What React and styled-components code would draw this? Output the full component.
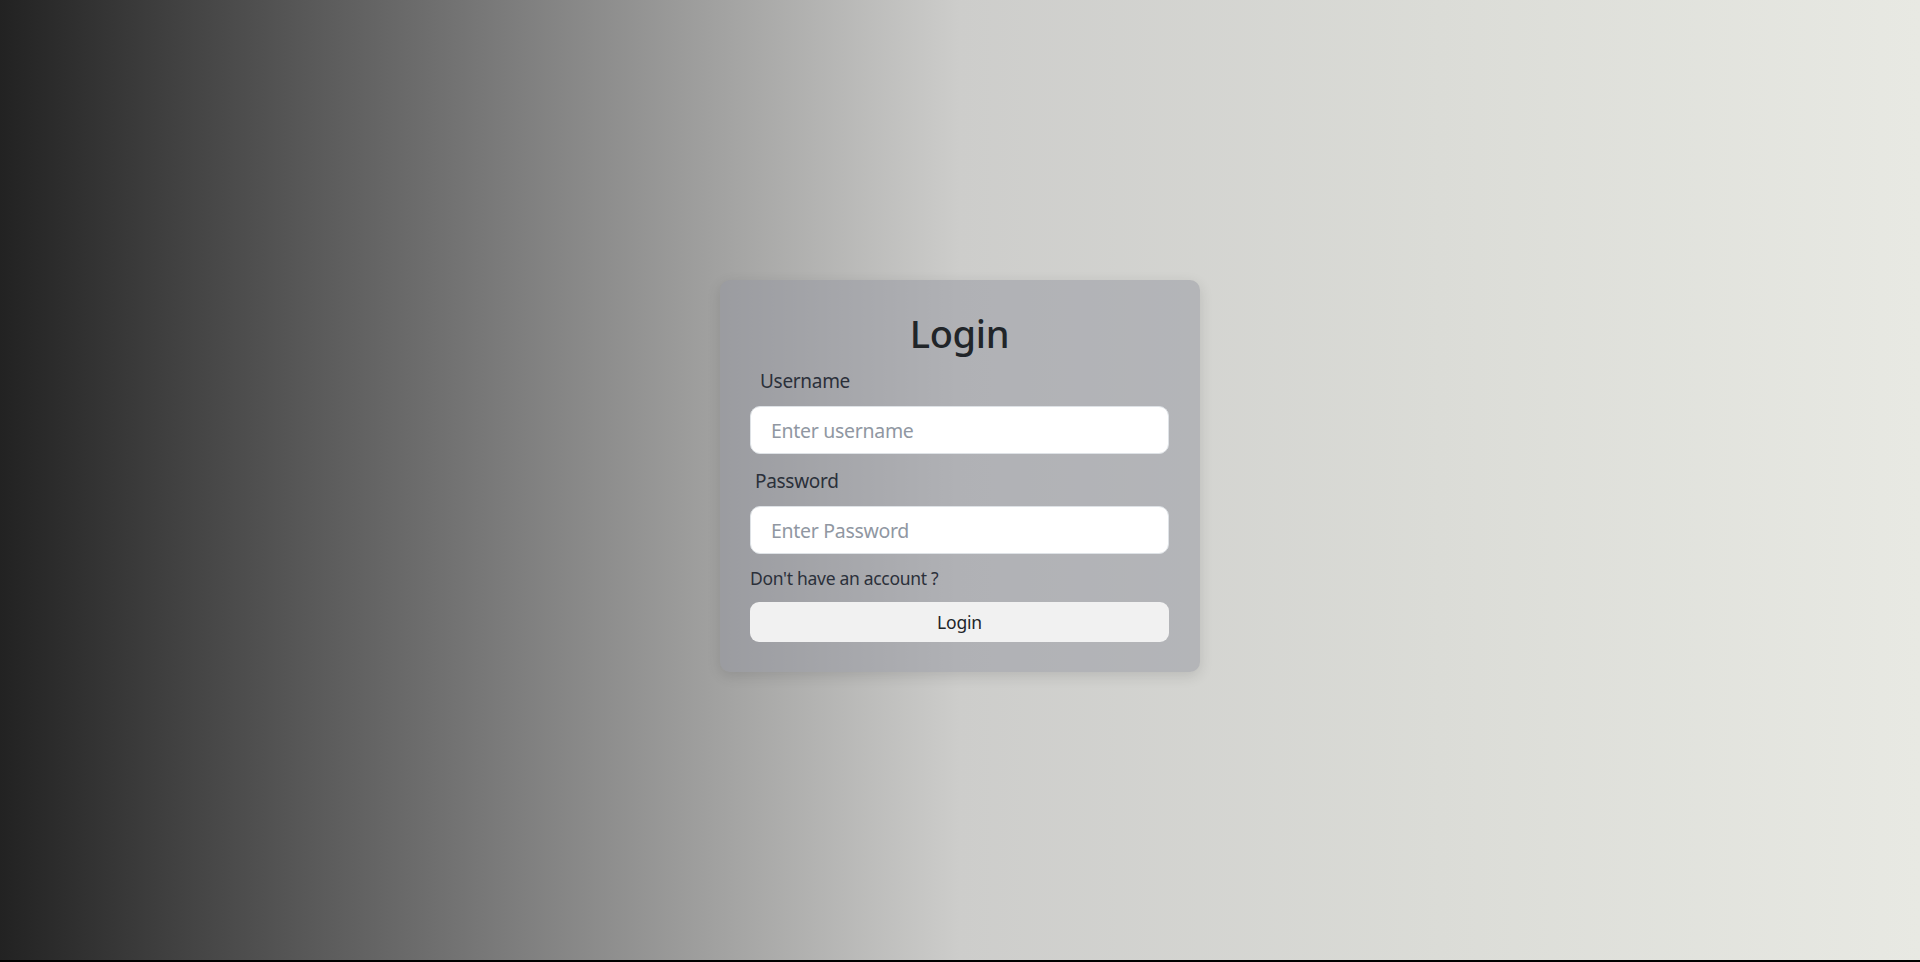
import React from "react";
import styled, { createGlobalStyle } from "styled-components";

const GlobalStyle = createGlobalStyle`
  html, body {
    margin: 0;
    padding: 0;
    background: #000;
  }
  * {
    box-sizing: border-box;
  }
  body {
    font-family: "Segoe UI", "Noto Sans", "Open Sans", sans-serif;
    color: #212529;
  }
`;

const Page = styled.div`
  height: 960px;
  display: flex;
  justify-content: center;
  align-items: center;
  padding-bottom: 8px;
  background: linear-gradient(90deg, #222222 0%, #777777 25%, #cdcdcb 50%, #dbdcd7 75%, #e8e9e3 100%);
`;

const Card = styled.form`
  width: 480px;
  padding: 30px 31px 30px 30px;
  border-radius: 10px;
  background: rgba(147, 150, 160, 0.5);
  box-shadow: 0 4px 14px rgba(0, 0, 0, 0.12);
  display: flex;
  flex-direction: column;
`;

const Title = styled.h1`
  margin: 0;
  font-size: 38px;
  line-height: 47px;
  font-weight: 500;
  letter-spacing: -0.3px;
  text-align: center;
  color: #212529;
`;

const Label = styled.label`
  display: block;
  margin: ${(p) => p.$mt}px 0 ${(p) => p.$mb}px;
  padding-left: ${(p) => p.$indent}px;
  font-size: 19px;
  line-height: 30px;
  letter-spacing: -0.3px;
  color: #2b303a;
`;

const Input = styled.input`
  width: 100%;
  height: 48px;
  padding: 1px 20px 0;
  border: 1.5px solid #dee2e6;
  border-radius: 10px;
  background: #fff;
  font-family: inherit;
  font-size: 19.5px;
  letter-spacing: -0.3px;
  color: #212529;
  outline: none;
  &::placeholder {
    color: #9097a2;
  }
`;

const SignupLink = styled.a`
  display: block;
  margin-top: 10px;
  font-size: 17.5px;
  line-height: 28px;
  letter-spacing: -0.3px;
  color: #2b303a;
  text-decoration: none;
  cursor: pointer;
`;

const Button = styled.button`
  margin-top: 10px;
  height: 40px;
  width: 100%;
  border: none;
  border-radius: 9px;
  background: #f1f1f1;
  font-family: inherit;
  font-size: 17.5px;
  letter-spacing: -0.2px;
  color: #212529;
  cursor: pointer;
`;

export default function App() {
  return (
    <>
      <GlobalStyle />
      <Page>
        <Card onSubmit={(e) => e.preventDefault()}>
          <Title>Login</Title>
          <Label $mt={9} $mb={10} $indent={10} htmlFor="username">
            Username
          </Label>
          <Input id="username" type="text" placeholder="Enter username" />
          <Label $mt={12} $mb={10} $indent={5} htmlFor="password">
            Password
          </Label>
          <Input id="password" type="password" placeholder="Enter Password" />
          <SignupLink>Don't have an account ?</SignupLink>
          <Button type="submit">Login</Button>
        </Card>
      </Page>
    </>
  );
}
